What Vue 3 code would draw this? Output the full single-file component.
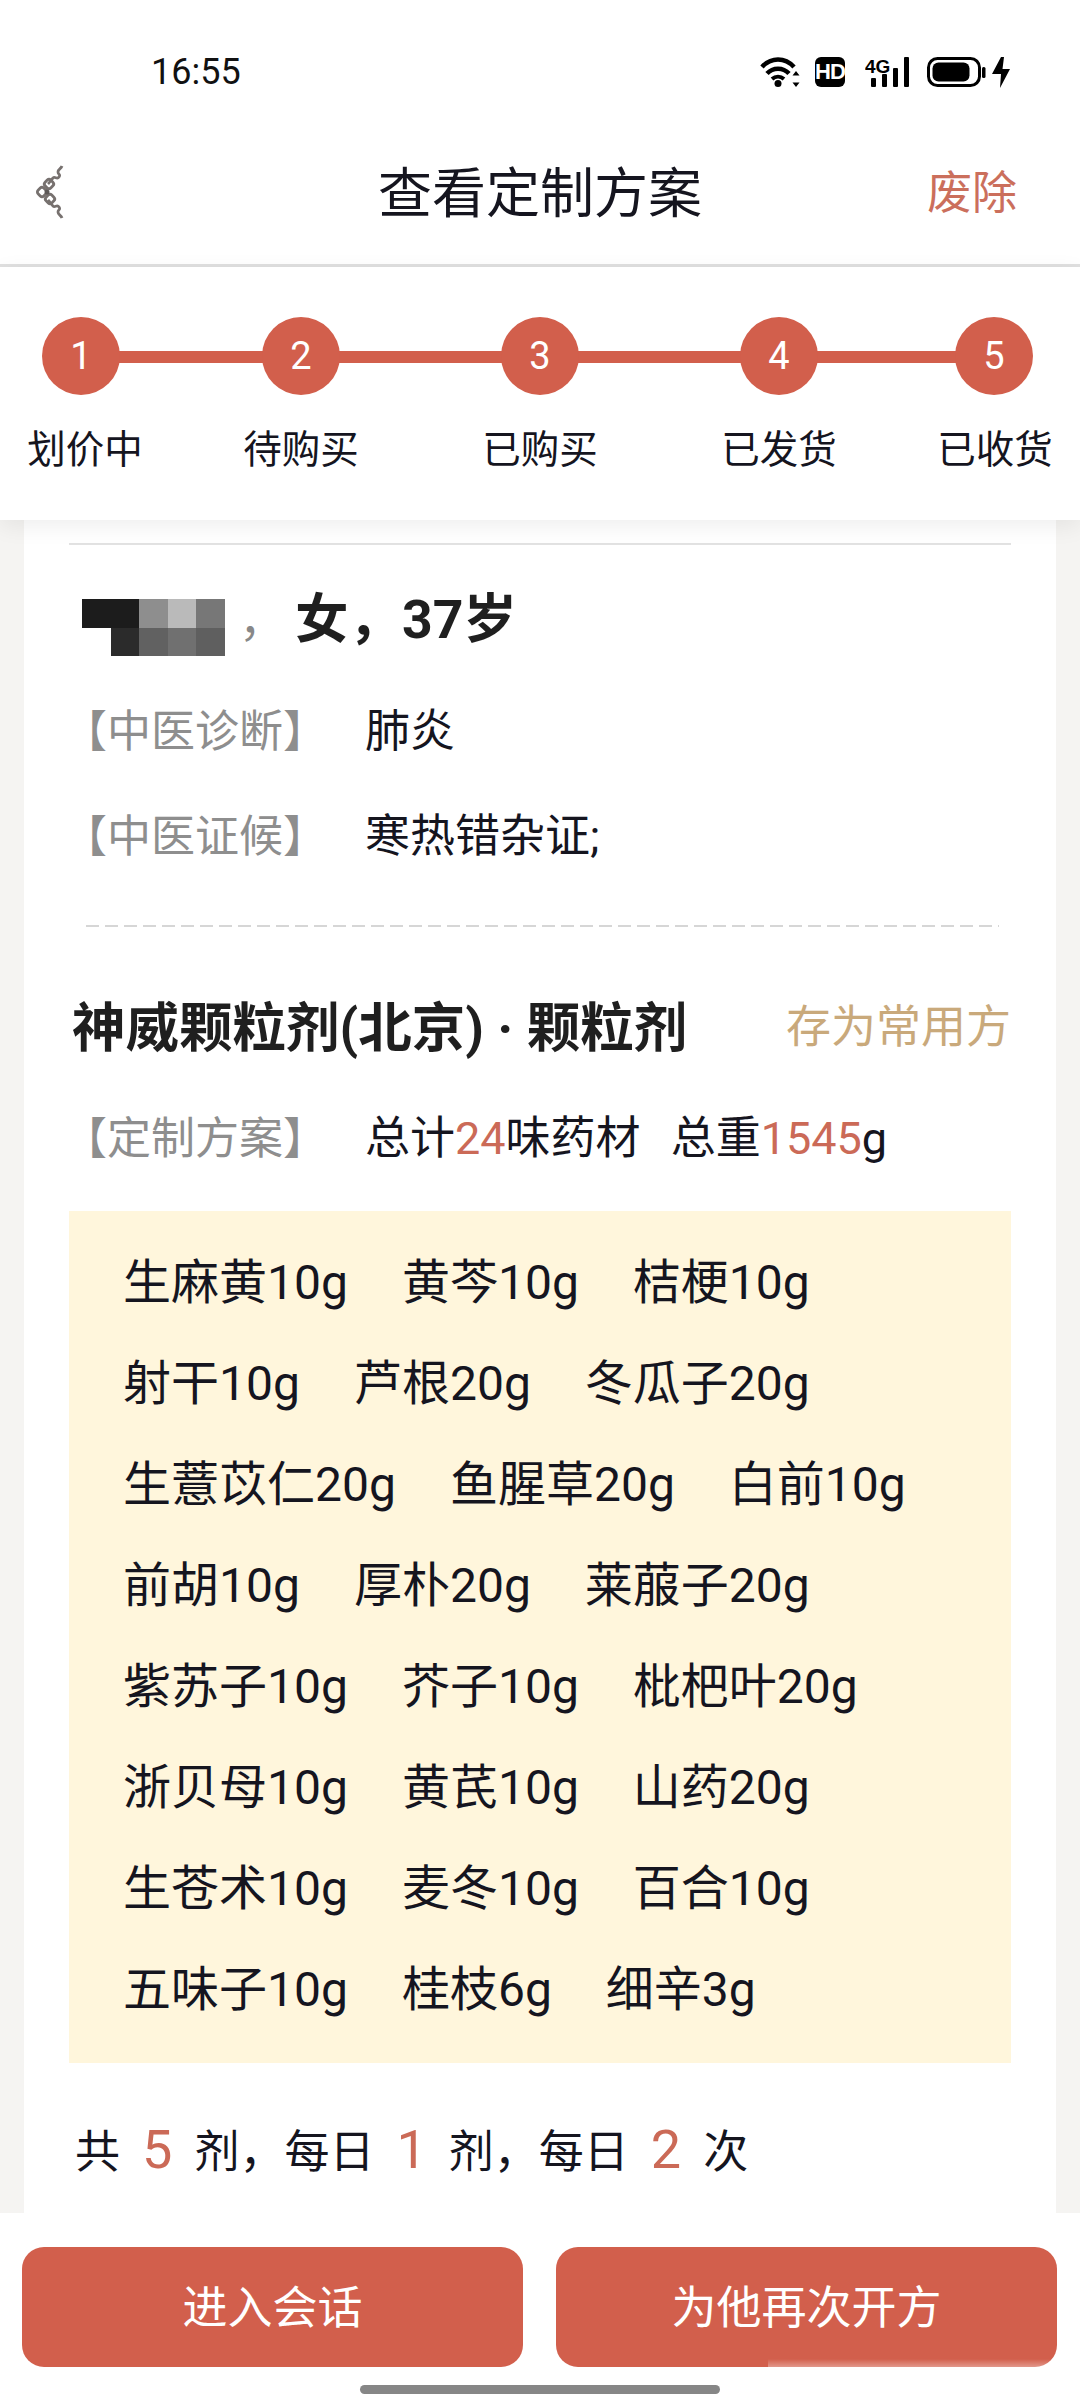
<template>
  <div class="page">
    <div class="status">
      <span class="time">16:55</span>
      <div class="status-icons">
        <svg class="ic-wifi" viewBox="0 0 40 32" width="40" height="32">
          <path d="M2 11C11 1 25 1 34 11" fill="none" stroke="#000" stroke-width="4.500"/>
          <path d="M7 17.500C13 11 23 11 29 17.500" fill="none" stroke="#000" stroke-width="4.500"/>
          <path d="M12 23C15.500 20 20.500 20 24 23" fill="none" stroke="#000" stroke-width="4"/>
          <circle cx="18" cy="27.500" r="3.500" fill="#000"/>
          <path d="M36 15l3.500 4.500h-7zM36 31l-3.500-4.500h7z" fill="#000"/>
        </svg>
        <div class="hd">HD</div>
        <svg class="ic-signal" viewBox="0 0 45 31" width="45" height="31">
          <text x="0" y="16" class="sig-text">4G</text>
          <rect x="6" y="21" width="5" height="9" rx="1" fill="#000"/>
          <rect x="17" y="17" width="5" height="13" rx="1" fill="#000"/>
          <rect x="28" y="11" width="5" height="19" rx="1" fill="#000"/>
          <rect x="39" y="0" width="5" height="30" rx="1" fill="#000"/>
        </svg>
        <svg class="ic-batt" viewBox="0 0 59 31" width="59" height="31">
          <rect x="1.500" y="1.500" width="51" height="27" rx="9" fill="none" stroke="#000" stroke-width="3"/>
          <rect x="5.500" y="5.500" width="37" height="19" rx="6" fill="#000"/>
          <rect x="55" y="10" width="3.500" height="11" rx="1.500" fill="#000"/>
        </svg>
        <svg class="ic-bolt" viewBox="0 0 18 31" width="18" height="31">
          <path d="M9 0H12L10.500 12H18L8 31L9 17H0Z" fill="#000"/>
        </svg>
      </div>
    </div>

    <div class="nav">
      <svg class="back" viewBox="0 0 30 56" width="30" height="56">
        <g fill="none" stroke="#77716f" stroke-width="2.800">
          <path d="M27 2c-1 3-4 3-4 6s3 2 1 5-4-1-6 1-3 4-5 6"/>
          <path d="M27 54c-1-3-4-3-4-6s3-2 1-5-4 1-6-1-3-4-5-6"/>
          <rect x="10" y="16" width="8" height="8" rx="2.500" transform="rotate(45 14 20)"/>
          <rect x="3" y="24" width="8" height="8" rx="2.500" transform="rotate(45 7 28)"/>
          <rect x="11" y="31" width="8" height="8" rx="2.500" transform="rotate(45 15 35)"/>
        </g>
        <circle cx="12" cy="28" r="2.500" fill="#5d5857"/>
      </svg>
      <div class="nav-title">查看定制方案</div>
      <div class="nav-action">废除</div>
    </div>

    <div class="steps">
      <div class="steps-line"></div>
      <div v-for="(s, i) in steps" :key="s" class="step">
        <div class="dot">{{ i + 1 }}</div>
        <div class="step-label">{{ s }}</div>
      </div>
    </div>

    <div class="content">
      <div class="card">
        <div class="top-line"></div>

        <div class="who">
          <div class="mosaic">
            <i v-for="(c, i) in mosaic" :key="i" :style="{ background: c }"></i>
          </div>
          <span class="who-comma">，</span>
          <span class="who-text">女，37岁</span>
        </div>

        <div class="info-row first">
          <span class="info-label">【中医诊断】</span>
          <span>肺炎</span>
        </div>
        <div class="info-row">
          <span class="info-label">【中医证候】</span>
          <span>寒热错杂证;</span>
        </div>

        <div class="dash"></div>

        <div class="drug-head">
          <span class="drug-name">神威颗粒剂(北京) · 颗粒剂</span>
          <span class="save">存为常用方</span>
        </div>

        <div class="info-row plan">
          <span class="info-label">【定制方案】</span>
          <span>总计<em>24</em>味药材</span>
          <span class="weight">总重<em>1545</em>g</span>
        </div>

        <div class="herbs">
          <span v-for="h in herbs" :key="h">{{ h }}</span>
        </div>

        <div class="dose">
          共<b>5</b>剂，每日<b>1</b>剂，每日<b>2</b>次
        </div>
      </div>
    </div>

    <div class="footer">
      <div class="btns">
        <div class="btn">进入会话</div>
        <div class="btn">为他再次开方</div>
      </div>
      <div class="home-bar"></div>
      <div class="smudge"></div>
    </div>
  </div>
</template>

<script setup>
const steps = ['划价中', '待购买', '已购买', '已发货', '已收货']

const mosaic = [
  '#1c1c1c', '#1c1c1c', '#8e8e8e', '#bababa', '#777777',
  '#ffffff', '#2b2b2b', '#616161', '#707070', '#5f5f5f'
]

const herbs = [
  '生麻黄10g', '黄芩10g', '桔梗10g',
  '射干10g', '芦根20g', '冬瓜子20g',
  '生薏苡仁20g', '鱼腥草20g', '白前10g',
  '前胡10g', '厚朴20g', '莱菔子20g',
  '紫苏子10g', '芥子10g', '枇杷叶20g',
  '浙贝母10g', '黄芪10g', '山药20g',
  '生苍术10g', '麦冬10g', '百合10g',
  '五味子10g', '桂枝6g', '细辛3g'
]
</script>

<style>
html,
body {
  margin: 0;
  background: #fff;
}
</style>

<style scoped>
.page {
  width: 1080px;
  height: 2400px;
  display: flex;
  flex-direction: column;
  overflow: hidden;
  background: #f5f4f2;
  color: #15151f;
  font-family: Roboto, "Noto Sans CJK SC", sans-serif;
}

.status {
  height: 120px;
  box-sizing: border-box;
  padding: 24px 70px 0 151px;
  display: flex;
  align-items: center;
  justify-content: space-between;
  background: #fff;
}

.time {
  font-size: 36px;
  color: #111;
}

.status-icons {
  display: flex;
  align-items: center;
}

.hd {
  width: 30px;
  height: 30px;
  margin: 0 20px 0 15px;
  border-radius: 6px;
  background: #000;
  color: #fff;
  font: bold 22px/30px "Liberation Sans Narrow", "Liberation Sans", sans-serif;
  letter-spacing: -1px;
  text-align: center;
}

.sig-text {
  font: bold 19px "Liberation Sans Narrow", "Liberation Sans", sans-serif;
  fill: #000;
}

.ic-batt {
  margin-left: 17px;
}

.ic-bolt {
  margin-left: 6px;
}

.nav {
  height: 147px;
  box-sizing: border-box;
  padding-bottom: 6px;
  display: grid;
  grid-template-columns: 1fr auto 1fr;
  align-items: center;
  background: #fff;
  border-bottom: 3px solid #e0e0e0;
}

.back {
  margin-left: 35px;
  margin-top: 6px;
}

.nav-title {
  font-size: 54px;
}

.nav-action {
  justify-self: end;
  margin-right: 63px;
  font-size: 45px;
  color: #cb6f5c;
}

.steps {
  position: relative;
  z-index: 2;
  height: 253px;
  box-sizing: border-box;
  padding-top: 50px;
  display: grid;
  grid-template-columns: 170px 262px 216px 262px 170px;
  background: #fff;
  box-shadow: 0 6px 22px rgba(0, 0, 0, 0.07);
}

.steps-line {
  position: absolute;
  left: 81px;
  right: 85px;
  top: 84px;
  height: 12px;
  background: #d25f4c;
}

.step {
  position: relative;
  display: flex;
  flex-direction: column;
  align-items: center;
}

.dot {
  width: 78px;
  height: 78px;
  border-radius: 50%;
  background: #d25f4c;
  color: #fff;
  font-size: 38px;
  line-height: 78px;
  text-align: center;
}

.step:nth-child(2) .dot {
  margin-left: -8px;
}

.step:last-child .dot {
  margin-left: -2px;
}

.step-label {
  margin-top: 30px;
  font-size: 38.500px;
  line-height: 50px;
}

.content {
  flex: 1;
  min-height: 0;
  padding: 0 24px;
  overflow: hidden;
}

.card {
  background: #fff;
  height: 100%;
  box-sizing: border-box;
  padding: 23px 45px 0;
}

.top-line {
  height: 2px;
  background: #e2e2e2;
}

.who {
  display: flex;
  align-items: flex-start;
  margin-top: 54px;
  height: 57px;
}

.mosaic {
  width: 143px;
  height: 57px;
  margin-left: 13px;
  display: grid;
  grid-template-columns: repeat(5, 1fr);
  grid-template-rows: 1fr 1fr;
}

.who-comma {
  margin-top: -8px;
  margin-left: 14px;
  font-size: 46px;
  line-height: 58px;
  color: #888;
}

.who-text {
  margin-top: -8px;
  margin-left: 10px;
  font-size: 53.500px;
  line-height: 58px;
  font-weight: 700;
  color: #1f1f1f;
}

.info-row {
  display: flex;
  height: 60px;
  line-height: 60px;
  margin-top: 45px;
  font-size: 45px;
  white-space: nowrap;
}

.info-row.first {
  margin-top: 46px;
}

.info-label {
  width: 302px;
  margin-left: -6px;
  font-size: 44px;
  color: #8e8e8e;
}

.info-row em {
  font-style: normal;
  color: #cb6a57;
}

.weight {
  margin-left: 30px;
}

.dash {
  height: 2px;
  margin: 58px 12px 0 17px;
  background: repeating-linear-gradient(90deg, #d6d6d6 0 13px, transparent 13px 19px);
}

.drug-head {
  display: flex;
  align-items: center;
  justify-content: space-between;
  height: 70px;
  margin-top: 61px;
  padding-left: 3px;
}

.drug-name {
  font-size: 53.500px;
  font-weight: 700;
  color: #1f1f1f;
  white-space: nowrap;
}

.save {
  font-size: 45px;
  color: #c9a97b;
}

.plan {
  margin-top: 51px;
}

.herbs {
  margin-top: 42px;
  padding: 42px 50px 43px 54px;
  display: flex;
  flex-wrap: wrap;
  column-gap: 54px;
  row-gap: 41px;
  background: #fff6dc;
  font-size: 48px;
  line-height: 60px;
}

.dose {
  margin-top: 52px;
  padding-left: 6px;
  font-size: 45px;
  line-height: 70px;
  white-space: nowrap;
}

.dose b {
  margin: 0 22px;
  font-size: 54px;
  font-weight: 400;
  color: #cb6a57;
}

.footer {
  position: relative;
  height: 187px;
  flex-shrink: 0;
  box-sizing: border-box;
  padding-top: 34px;
  background: #fff;
}

.btns {
  display: flex;
  gap: 33px;
  padding: 0 23px 0 22px;
}

.btn {
  flex: 1;
  height: 120px;
  border-radius: 22px;
  background: #d25f4c;
  color: #fff;
  font-size: 45px;
  line-height: 124px;
  text-align: center;
}

.home-bar {
  width: 360px;
  height: 9px;
  margin: 18px auto 0;
  border-radius: 5px;
  background: #868686;
}

.smudge {
  position: absolute;
  left: 768px;
  right: 20px;
  top: 146px;
  height: 32px;
  background: linear-gradient(180deg, rgba(255, 255, 255, 0) 0%, rgba(255, 255, 255, 0.85) 60%, #fff 100%);
}
</style>
